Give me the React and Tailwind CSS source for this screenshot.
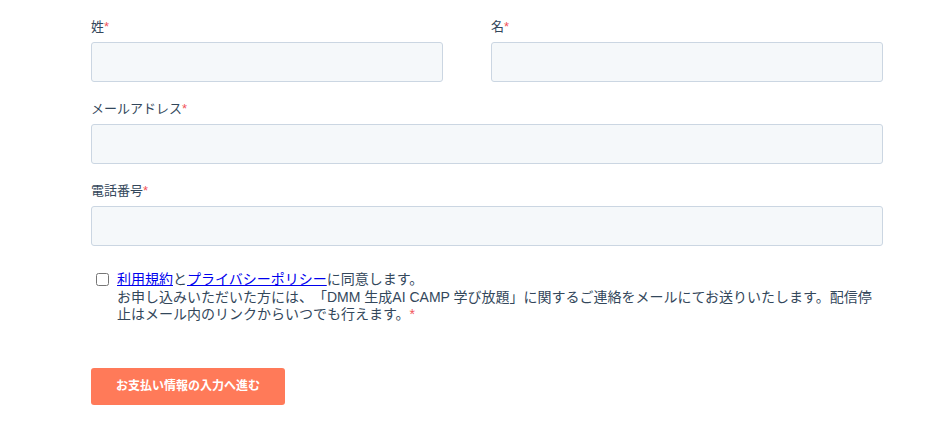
const font = { fontFamily: '"Liberation Sans", "Noto Sans CJK JP", sans-serif' }

function Field({ label, className = '' }) {
  return (
    <div className={className}>
      <label className="mb-[5px] block h-5 text-[13px] leading-5 text-[#33475b]">
        {label}
        <span className="text-[#f2545b]">*</span>
      </label>
      <input
        type="text"
        className="block h-10 w-full rounded-[3px] border border-[#cbd6e2] bg-[#f5f8fa] px-3 text-sm text-[#33475b] outline-none"
      />
    </div>
  )
}

export default function App() {
  return (
    <div className="min-h-[439px] bg-white [text-spacing-trim:space-all]" style={font}>
      <form className="ml-[91px] w-[792px] pt-[17px]">
        <div className="flex gap-12">
          <Field label="姓" className="w-[352px]" />
          <Field label="名" className="w-[392px]" />
        </div>

        <Field label="メールアドレス" className="mt-[17px]" />
        <Field label="電話番号" className="mt-[17px]" />

        <div className="mt-[25px] flex items-start">
          <input
            type="checkbox"
            className="ml-[5px] mt-[2px] h-[13px] w-[13px] shrink-0"
          />
          <p className="ml-2 text-sm leading-[17.5px] text-[#33475b]">
            <a href="#" className="text-[#0000ee] underline">利用規約</a>と<a href="#" className="text-[#0000ee] underline">プライバシーポリシー</a>に同意します。
            <br />
            お申し込みいただいた方には、「DMM 生成AI CAMP 学び放題」に関するご連絡をメールにてお送りいたします。配信停止はメール内のリンクからいつでも行えます。<span className="text-[#f2545b]">*</span>
          </p>
        </div>

        <button
          type="button"
          className="mt-[44px] h-[37px] w-[194px] rounded-[3px] bg-[#ff7a59] text-xs font-bold text-white"
        >
          お支払い情報の入力へ進む
        </button>
      </form>
    </div>
  )
}
